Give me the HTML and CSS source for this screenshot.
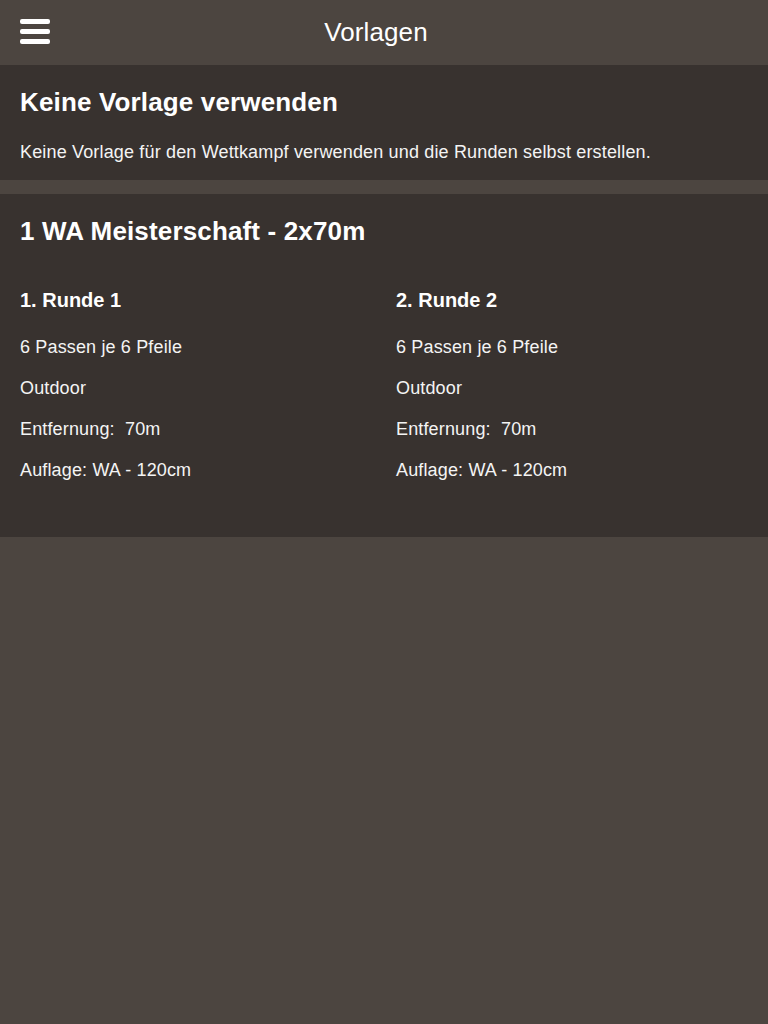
FILE: index.html
```html
<!DOCTYPE html>
<html lang="de">
<head>
<meta charset="utf-8">
<title>Vorlagen</title>
<link rel="stylesheet" href="styles.css">
</head>
<body>
<header class="topbar">
  <button class="menu" aria-label="Menü">
    <span class="bar"></span><span class="bar"></span><span class="bar"></span>
  </button>
  <h1 class="title">Vorlagen</h1>
</header>
<main class="list">
  <section class="card card-none">
    <h2 class="card-title">Keine Vorlage verwenden</h2>
    <p class="card-text">Keine Vorlage für den Wettkampf verwenden und die Runden selbst erstellen.</p>
  </section>
  <section class="card card-template">
    <h2 class="card-title">1 WA Meisterschaft - 2x70m</h2>
    <div class="rounds">
      <div class="round">
        <h3 class="round-title">1. Runde 1</h3>
        <p class="round-line">6 Passen je 6 Pfeile</p>
        <p class="round-line">Outdoor</p>
        <p class="round-line">Entfernung:&nbsp; 70m</p>
        <p class="round-line">Auflage: WA - 120cm</p>
      </div>
      <div class="round">
        <h3 class="round-title">2. Runde 2</h3>
        <p class="round-line">6 Passen je 6 Pfeile</p>
        <p class="round-line">Outdoor</p>
        <p class="round-line">Entfernung:&nbsp; 70m</p>
        <p class="round-line">Auflage: WA - 120cm</p>
      </div>
    </div>
  </section>
</main>
</body>
</html>
```

FILE: styles.css
```css
* { box-sizing: border-box; }

html, body {
  margin: 0;
  padding: 0;
  background: #4c4540;
  color: #ffffff;
  font-family: "Liberation Sans", Arial, sans-serif;
  min-height: 100%;
}

.topbar {
  height: 65px;
  display: flex;
  align-items: center;
  justify-content: center;
  position: relative;
  background: #4c4540;
}

.menu {
  position: absolute;
  left: 20px;
  top: 19px;
  width: 30px;
  height: 25px;
  padding: 0;
  border: 0;
  background: transparent;
  display: flex;
  flex-direction: column;
  justify-content: space-between;
}

.bar {
  display: block;
  width: 30px;
  height: 5px;
  border-radius: 2px;
  background: #ffffff;
}

.title {
  margin: 0 16px 2px 0;
  font-size: 26px;
  font-weight: normal;
  line-height: 30px;
  letter-spacing: 0.1px;
  color: #ffffff;
}

.list {
  display: flex;
  flex-direction: column;
  gap: 14px;
}

.card {
  background: #38322f;
  padding: 22px 20px 17px;
}

.card-title {
  margin: 0;
  font-size: 26px;
  font-weight: bold;
  line-height: 30px;
  letter-spacing: 0.15px;
  color: #ffffff;
}

.card-text {
  margin: 24px 0 0;
  font-size: 18px;
  line-height: 22px;
  letter-spacing: 0.16px;
  color: #f4f4f4;
}

.card-template {
  padding: 22px 20px 56px;
}

.rounds {
  display: grid;
  grid-template-columns: 376px 1fr;
  margin-top: 42px;
}

.round-title {
  margin: 0 0 24px;
  font-size: 20px;
  font-weight: bold;
  line-height: 24px;
  color: #ffffff;
}

.round-line {
  margin: 0 0 19px;
  font-size: 18px;
  line-height: 22px;
  letter-spacing: 0.15px;
  color: #f4f4f4;
}

.round-line:last-child {
  margin-bottom: 0;
}
```
